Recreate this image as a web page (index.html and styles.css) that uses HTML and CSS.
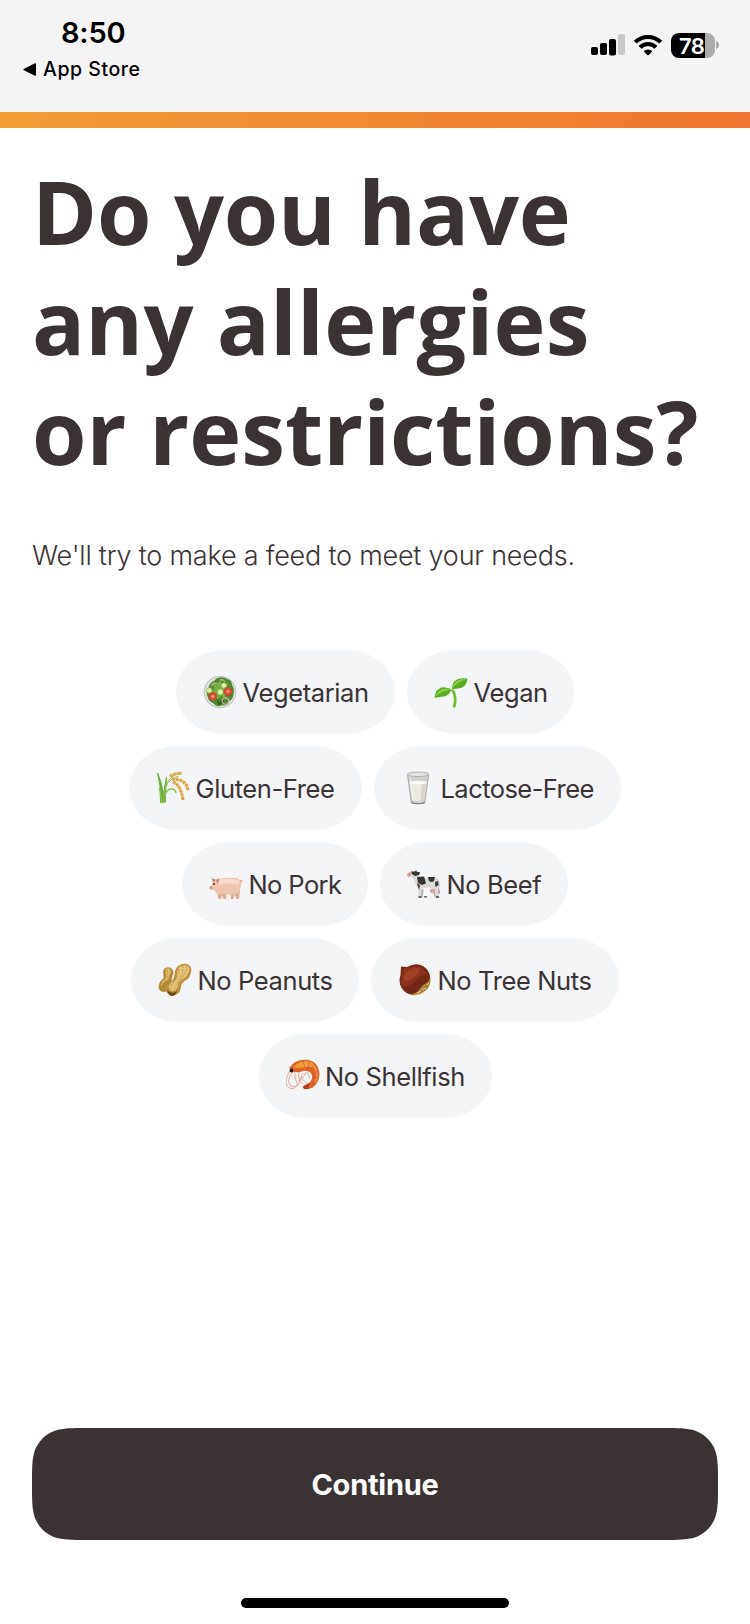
FILE: index.html
```html
<!DOCTYPE html>
<html lang="en">
<head>
<meta charset="utf-8">
<title>Allergies</title>
<link rel="stylesheet" href="styles.css">
</head>
<body>
<div class="screen">
  <header class="status">
    <div class="status-left">
      <div class="time">8:50</div>
      <div class="back">
        <svg class="back-arrow" viewBox="0 0 13 13"><path d="M1 5.700 12 .3q1-.3 1 .7v11q0 1-1 .7L1 7.300q-1.400-.8 0-1.600z"/></svg>
        <span class="back-label">App Store</span>
      </div>
    </div>
    <div class="status-right">
      <svg class="signal" viewBox="0 0 34 22">
        <rect x="0" y="13" width="7" height="8" rx="2"/><rect x="9" y="9" width="7" height="12" rx="2"/><rect x="18" y="5" width="7" height="16.500" rx="2"/><rect x="27" y="0" width="7" height="21" rx="2" fill="#c8c8c8"/>
      </svg>
      <svg class="wifi" viewBox="0 0 30 22">
        <g fill="none" stroke="#000" stroke-width="4"><path d="M2.200 8.200a18.200 18.200 0 0 1 25.600 0"/><path d="M7 13.300a11.300 11.300 0 0 1 16 0"/></g>
        <path d="M10.600 17.300a6.300 6.300 0 0 1 8.800 0L15.700 21q-.7.6-1.400 0z"/>
      </svg>
      <div class="battery"><span class="level">78</span></div>
      <svg class="battery-tip" viewBox="0 0 3 8"><path d="M0 0q3 1 3 4T0 8z" fill="#ababab"/></svg>
    </div>
  </header>
  <div class="progress"></div>
  <main class="content">
    <h1 class="title"><span class="line line-a">Do you have</span><span class="line line-b">any allergies</span><span class="line line-c">or restrictions?</span></h1>
    <p class="subtitle">We'll try to make a feed to meet your needs.</p>
    <div class="chips">
      <div class="row">
        <div class="chip vegetarian">
          <svg class="icon" viewBox="0 0 34 34">
            <circle cx="17" cy="17" r="16.300" fill="#c3c9c7"/><circle cx="17" cy="17" r="15" fill="#e1e5e1"/>
            <path d="M17 2.500q4-1 7 1.500 5 1 5 6 3 4 1.500 9 0 5-4 7-3 5-8 4.500-5 2-8-2-5-2-6-7-2-5 1-9 1-5 6-7 2-3 5.500-3z" fill="#4d8b2e"/>
            <path d="M10 7l4 3 3-5 3 6 5-4-1 7 5 3-7 3 1 5-5-4-5 5-1-7-6-1 5-4z" fill="#76b241"/>
            <path d="M13 23l4 4 5-4-2 6-5 1z" fill="#2d651d"/>
            <g fill="none" stroke="#c7ad9d" stroke-width="1.300"><path d="M8.500 11.500a4 4 0 0 1 7-2"/><circle cx="22.500" cy="26" r="3.200"/><path d="M17 5q4-1 5 2"/></g>
            <g fill="#e3f0a8" stroke="#83b548" stroke-width=".8"><circle cx="6.300" cy="15.500" r="2.700"/><circle cx="20.800" cy="10.500" r="2.700"/><circle cx="17.300" cy="17" r="3"/></g>
            <g fill="#d94f38" stroke="#b5402c" stroke-width=".5"><circle cx="9.800" cy="21.500" r="4"/><circle cx="25" cy="16.500" r="4.200"/></g>
            <g fill="#f2a37a"><circle cx="9.800" cy="21.500" r="1.400"/><circle cx="25" cy="16.500" r="1.400"/></g>
          </svg>
          <span class="label">Vegetarian</span>
        </div>
        <div class="chip vegan">
          <svg class="icon" viewBox="0 0 34 34">
            <path d="M18.500 15q4.500 7 1.500 17.500" fill="none" stroke="#72bd2b" stroke-width="2.700"/>
            <path d="M18.500 15.500q-5-3-9 2" fill="none" stroke="#83ca3a" stroke-width="1.500"/>
            <path d="M.5 23Q1 14.500 7.500 12.500q5-1 10 2.500-3 6-8 6.500-5 0-9 1.500z" fill="#5aac27"/>
            <path d="M1 22q6-6 15.500-7-6-2.500-10 0T1 22z" fill="#86cd42"/>
            <path d="M18 14Q18 7 23 4.500q5-2 10.500-1-1 8-6.500 9.500-5 1-9 1z" fill="#59ad25"/>
            <path d="M18.500 13Q24 6 33 4q-6-.5-10 2t-4.500 7z" fill="#90d44a"/>
          </svg>
          <span class="label">Vegan</span>
        </div>
      </div>
      <div class="row">
        <div class="chip gluten">
          <svg class="icon" viewBox="0 0 34 34">
            <path d="M4.500 32Q5 15 1.500 2q6 12 6 29M7.500 32Q7 20 10.500 6q-1 13-1 25" fill="#65a832" stroke="#65a832" stroke-width=".8"/>
            <path d="M3 17q3 7 3 15M7.500 32q1-14 8-14 4 0 4.500 4" fill="none" stroke="#8ac34a" stroke-width="1.400"/>
            <path d="M7.500 28Q8 8 23 5M8 21Q11 4 25 2" fill="none" stroke="#8fb345" stroke-width=".9"/>
            <g fill="none" stroke="#d7a03c" stroke-width="3" stroke-dasharray="3 .7"><path d="M14 5.500q5-4 11.500-3"/><path d="M16 8q14 0 16 11"/><path d="M17 11q8 3 10 18"/></g>
            <g fill="none" stroke="#edc77c" stroke-width="1" stroke-dasharray="1.800 1.900"><path d="M14 4.500q5-3 11-2M18 7.500q12 2 14 11M19 11.500q7 6 8 16"/></g>
          </svg>
          <span class="label">Gluten-Free</span>
        </div>
        <div class="chip lactose">
          <svg class="icon" viewBox="0 0 34 34">
            <path d="M6.500 3.500 10.300 32q6.700 2 13.400 0l4-28.500z" fill="#d0d2d1" stroke="#999c9b" stroke-width=".8"/>
            <path d="M8.500 11.500 11.400 29q5.600 2 11.200 0l3-17.500z" fill="#ebe8e0"/><path d="M21 12h4.600l-3 17-3 1z" fill="#d8d4ca"/>
            <ellipse cx="17.100" cy="3.300" rx="10.700" ry="2.300" fill="#dfe1df" stroke="#a2a6a5" stroke-width=".8"/>
            <ellipse cx="17.100" cy="11.500" rx="8.700" ry="1.800" fill="#faf9f3"/>
            <path d="M10.500 31q6.500 2.400 13 0v1.200q-6.500 1.500-13 0z" fill="#717574"/><path d="M9 6l2.800 22" stroke="#fff" opacity=".65"/>
          </svg>
          <span class="label">Lactose-Free</span>
        </div>
      </div>
      <div class="row">
        <div class="chip pork">
          <svg class="icon" viewBox="0 0 34 34">
            <path d="M21 25l1 7h2.500l1-5 2 5H30l1-10zM8 25l1.500 7h2.700l.8-4 1.500 4H17l1-8z" fill="#dfac96"/>
            <path d="M30 15q3 2 3-1-1-2-2 0" fill="none" stroke="#dba48f" stroke-width="1"/>
            <path d="M3 12l3 .5q2-1.500 5-.7 10-1.800 18-.3 4 3 3 8-1 5-4 7-8 2-14 .5l-5 .5q-3-2-4-4.500l-4-1q-1-2 1-3 1-1 1.500-3z" fill="#efc4b1"/>
            <path d="M8 13q13-3 21 0 2 3 0 5-10-3-20 0z" fill="#fae0d2" opacity=".75"/>
            <path d="M2.500 11l4 2-2 2zM10 12l-3 1 2 4z" fill="#bc7a69"/><circle cx="5" cy="17" r=".9" fill="#3b2822"/><path d="M.8 19.500q2-1 3 2l-2 1q-2-1-1-3z" fill="#d8937f"/>
          </svg>
          <span class="label">No Pork</span>
        </div>
        <div class="chip beef">
          <svg class="icon" viewBox="0 0 34 34">
            <path d="M31 12q2 3 1 9l1 5-2 1V15" fill="#8a8680"/>
            <path d="M13 23l-.5 7.500h3l1-8zM25 22l3 8.500h2.700L30 21z" fill="#a9a8a4"/>
            <path d="M9 10l5-.5q8 2 15 1 3 1 3 5l-.5 8 .5 7.500h-3l-2-8-5-3-7 1.500-1 9.500h-3l.2-9L9 18 7 12z" fill="#dcdbd8"/>
            <path d="M3 5l5-1 5 3-2 4-4 1-2-2-4 1-1-3z" fill="#dad8d5"/><path d="M0 7l3-2 1.500 3L1 9.500z" fill="#d89383"/>
            <path d="M4 4.500h4l1-1.500 1 2h3l-1 3-4 1-3-2zM10 10l7-.5 2 7-4 1.500-4-2zM21 10h7l-1 4q-2 2-5 0zM28 15l3-1 .5 4-3 2zM10 16l3 2-1 5z" fill="#353533"/>
            <path d="M23 22h5v4q-3 1-5-1z" fill="#dda69a"/><path d="M11.500 29h3v2h-3zM17 29h3v1.500h-3zM29 29h3v2h-3z" fill="#6a6661"/>
          </svg>
          <span class="label">No Beef</span>
        </div>
      </div>
      <div class="row">
        <div class="chip peanuts">
          <svg class="icon" viewBox="0 0 34 34">
            <path d="M6 6q3-3 7-1 4 3 1.500 8-1 3-1 7-1 8-7 9Q1 29 .5 24q0-4 3-7 3-2 2-5-1-4 .5-6z" fill="#b58a37"/>
            <path d="M8 6q3-2 5 1 1 3-2 6 0 4-3 5-4 2-5 6 0-5 3-7 3-3 2-5-1-4 0-6z" fill="#dfbd6b"/>
            <path d="M20 3q6-4 11-1 4 3 1.500 9-1 5-6 7-3 2-3.500 6-1 8-8 8.500-7 0-7-7 0-5 5-7 3-2 3.500-7 0-5 3.500-8.500z" fill="#bc9140"/>
            <path d="M21 4q5-3 9-1 3 3 0 7-1 4-6 6-4 2-4 7-2 6-6 5-4-1-3-5 1-3 5-5 3-2 3-7 0-4 2-7z" fill="#e2c378"/>
            <g fill="none" stroke="#a67c37" stroke-width=".7" stroke-dasharray="2 1.300"><path d="M21 6q-1 8-5 13-3 3-4 9M25 3q0 8-4 14-5 7-5 14M29 3q0 7-6 12M9 7q2 5-1 10-4 5-4 9M12 7q1 6-2 11"/></g>
            <path d="M9 27q5 5 10 1-2 5-5 5-3 0-5-6z" fill="#684514"/>
          </svg>
          <span class="label">No Peanuts</span>
        </div>
        <div class="chip nuts">
          <svg class="icon" viewBox="0 0 34 34">
            <path d="M31 11q4 7-1 14-6 8-15 7.500-4-1-5-3z" fill="#d5b36b"/>
            <path d="M3 3.500l6 .5Q18-1 25 3q7 5 7 11 0 4-3 6-5 2-7 6-2 4-7 5.500-7 0-11-6Q0 20 2.500 12z" fill="#762817"/>
            <path d="M5 6q8-3 14-3 7 1 10 8-8 2-13 8-6 6-12 4-3-7 0-12z" fill="#8c321c"/>
            <path d="M9 8q8-5 13-2-1 5-7 9-5 4-9 3-1-6 3-10z" fill="#b04e30" opacity=".55"/>
            <path d="M15 31q5-2 7-5 2-4 7-6 2-1 3-5 1 7-3 11-6 6-14 5z" fill="#a7803c"/>
            <path d="M19 30l4-2M24 27l4-2M29 22l2-2" stroke="#e9ce92"/>
          </svg>
          <span class="label">No Tree Nuts</span>
        </div>
      </div>
      <div class="row">
        <div class="chip shellfish">
          <svg class="icon" viewBox="0 0 34 34">
            <g fill="none" stroke="#e7a38f" stroke-width=".9"><path d="M4 12Q-3 22 2 28q5 4 10-2l4-8M7 13q-8 8-2 14 5 2 7-3M9 14q-1 5 2 10M13 13q-2 6 4 12M20 14l-4 6 6 5M21 13l3 7M17 14l-4 8"/></g>
            <path d="M3 9Q9 0 21 .7q9 1 11.500 9 2.500 8-1.500 14-3 6-11 6.500-3-.5-3-2.500 1-2 5-3 5-3 4-8-1-5-8-5-5 2-10 1.500z" fill="#df6428"/>
            <path d="M7 8Q13 2 21 2q8 1 10 9-4-4-11-3-6 2-13 0z" fill="#f19b3a"/>
            <path d="M29 9q4 8 0 14" fill="none" stroke="#f1894d" stroke-width="2"/>
            <path d="M17 2l2 6M23 2l-1 7M29 5l-4 6M32 12l-5 3M33 19l-6-.5M29 26l-4-4" stroke="#c9572a" stroke-width=".6"/>
            <path d="M24 24l-7 3.500q0 3 5 2.500z" fill="#bb3b20"/><circle cx="5.500" cy="11.500" r="1.900" fill="#241714"/>
          </svg>
          <span class="label">No Shellfish</span>
        </div>
      </div>
    </div>
    <button class="continue" type="button">Continue</button>
  </main>
  <div class="home"></div>
</div>
</body>
</html>
```
FILE: styles.css
```css
* { box-sizing: border-box; }
body { margin: 0; background: #fff; }
.screen {
  display: flex;
  flex-direction: column;
  width: 750px;
  height: 1624px;
  color: #3b3333;
  font-family: Inter, sans-serif;
  background: #fff;
}
.status {
  display: flex;
  justify-content: space-between;
  height: 112px;
  padding: 16px 31px 0 23px;
  color: #000;
  background: #f4f4f4;
}
.time {
  padding-left: 38px;
  font-size: 29px;
  font-weight: 600;
  line-height: 34px;
  letter-spacing: -.2px;
}
.back {
  display: flex;
  align-items: center;
  gap: 7px;
  margin-top: 7px;
}
.back-arrow { width: 13px; height: 13px; }
.back-label {
  font-size: 19.5px;
  font-weight: 500;
  line-height: 24px;
  letter-spacing: .55px;
}
.status-right {
  display: flex;
  align-items: center;
  height: 26px;
  margin-top: 16px;
}
.signal { width: 34px; height: 22px; }
.wifi { width: 30px; height: 22px; margin-left: 8px; }
.battery {
  width: 44px;
  height: 25px;
  margin-left: 8px;
  border-radius: 8px;
  background: linear-gradient(90deg, #000 34px, #ababab 34px);
}
.level {
  display: block;
  padding-left: 8px;
  color: #fff;
  font-size: 22px;
  font-weight: 600;
  line-height: 26px;
  letter-spacing: -.5px;
}
.battery-tip { width: 3px; height: 8px; margin-left: 1px; }
.progress {
  height: 16px;
  background: linear-gradient(100deg, #f29d38, #ee752f);
}
.content {
  display: flex;
  flex-direction: column;
  height: 1412px;
  padding: 28px 32px 0;
}
.title {
  margin: 0;
  font-family: "Open Sans", sans-serif;
  font-size: 88px;
  font-weight: 750;
  line-height: 110px;
}
.line { display: block; white-space: nowrap; }
.line-a { letter-spacing: -.2px; }
.line-b { letter-spacing: .2px; }
.line-c { letter-spacing: 0; }
.subtitle {
  margin: 52px 0 0;
  font-size: 27px;
  font-weight: 300;
  line-height: 36px;
  letter-spacing: -.22px;
  white-space: nowrap;
}
.chips {
  display: flex;
  flex-direction: column;
  gap: 12px;
  margin-top: 76px;
}
.row { display: flex; justify-content: center; gap: 12px; }
.chip {
  display: flex;
  align-items: center;
  gap: 5.5px;
  height: 84px;
  padding-left: 27px;
  border-radius: 48px / 42px;
  background: #f3f5f7;
}
.icon { flex: none; width: 34px; height: 34px; }
.label {
  padding-top: 1px;
  font-size: 25.5px;
  line-height: 32px;
  letter-spacing: -.38px;
  white-space: nowrap;
}
.vegetarian { width: 219px; }
.vegan { width: 167px; }
.gluten { width: 233px; }
.lactose { width: 247px; }
.lactose .label { letter-spacing: -.55px; }
.pork { width: 186px; }
.pork .label { letter-spacing: -.6px; }
.beef { width: 188px; }
.peanuts { width: 228px; }
.nuts { width: 248px; }
.shellfish { width: 233px; }
.continue {
  width: 686px;
  height: 112px;
  margin-top: auto;
  padding: 2px 0 0;
  border: 0;
  color: #fff;
  background: #3b3333;
  font: 700 29px/36px Inter, sans-serif;
  letter-spacing: -.25px;
  clip-path: path("M55 0H631C646.800 0 654.700 0 663.300 2.700C672.600 6.100 679.900 13.400 683.300 22.700C686 31.300 686 39.200 686 55V57C686 72.800 686 80.700 683.300 89.300C679.900 98.600 672.600 105.900 663.300 109.300C654.700 112 646.800 112 631 112H55C39.200 112 31.300 112 22.700 109.300C13.400 105.900 6.100 98.600 2.700 89.300C0 80.700 0 72.800 0 57V55C0 39.200 0 31.300 2.700 22.700C6.100 13.400 13.400 6.100 22.700 2.700C31.300 0 39.200 0 55 0Z");
}
.home {
  align-self: center;
  width: 268px;
  height: 10px;
  margin-top: 58px;
  border-radius: 5px;
  background: #000;
}
```
